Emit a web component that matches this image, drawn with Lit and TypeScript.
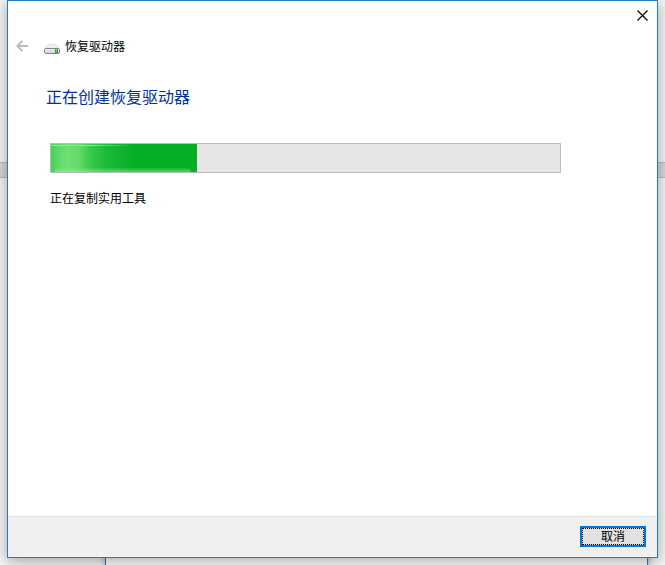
import { LitElement, html, css } from "lit";
import { customElement, property } from "lit/decorators.js";
import { styleMap } from "lit/directives/style-map.js";

@customElement("green-progress")
class GreenProgress extends LitElement {
  @property({ type: Number }) value = 0;

  static styles = css`
    :host {
      display: block;
    }
    .track {
      box-sizing: border-box;
      height: 30px;
      border: 1px solid #bcbcbc;
      background: #e6e6e6;
    }
    .fill {
      position: relative;
      height: 100%;
      overflow: hidden;
      background: linear-gradient(90deg, #45d058 0, #66dc6e 10px, #6ee074 18px, #62da6b 28px, #38c94b 40px, #1cb93a 56px, #06b025 82px);
    }
    .fill::before {
      content: "";
      position: absolute;
      top: 1px;
      left: 0;
      width: 84px;
      height: 1px;
      background: linear-gradient(90deg, #8ceb90 0, #8ceb90 40%, transparent);
    }
    .fill::after {
      content: "";
      position: absolute;
      bottom: 0;
      left: 4px;
      right: 6px;
      height: 4px;
      border-radius: 6px 6px 0 0;
      background: linear-gradient(180deg, rgba(150, 235, 150, 0.1), rgba(160, 240, 160, 0.5));
    }
  `;

  render() {
    return html`
      <div class="track" role="progressbar" aria-label="正在复制实用工具" aria-valuemin="0" aria-valuemax="100" aria-valuenow=${this.value}>
        <div class="fill" style=${styleMap({ width: `${this.value}%` })}></div>
      </div>
    `;
  }
}

@customElement("app-root")
class AppRoot extends LitElement {
  static styles = css`
    :host {
      display: block;
      font-family: "Noto Sans CJK SC", "Noto Sans", sans-serif;
      font-size: 12px;
      line-height: 16px;
      color: #000;
    }
    .desktop {
      position: relative;
      box-sizing: border-box;
      min-height: 100vh;
      padding: 0 7px 7px;
      display: flex;
      overflow: hidden;
      background: #f6f6f6;
    }
    .band {
      position: absolute;
      top: 162px;
      left: 0;
      right: 0;
      box-sizing: border-box;
      height: 16px;
      border: solid #bdbdbd;
      border-width: 1px 0;
      background: #d9d9d9;
    }
    .behind {
      position: absolute;
      bottom: 0;
      left: 105px;
      right: 17px;
      height: 40px;
      border: solid #2b7fc4;
      border-width: 0 1px;
      background: #fff;
      box-shadow: 0 0 6px rgba(0, 0, 0, 0.4);
    }
    .dialog {
      position: relative;
      flex: 1;
      display: flex;
      flex-direction: column;
      border: 1px solid #1b80cc;
      background: #fff;
      box-shadow: 0 3px 14px rgba(0, 0, 0, 0.36);
    }
    .titlebar {
      display: flex;
      justify-content: flex-end;
      height: 29px;
    }
    button {
      font: inherit;
      color: inherit;
      padding: 0;
      border: 0;
      background: none;
    }
    .close {
      width: 29px;
      height: 29px;
    }
    svg {
      display: block;
    }
    .close svg {
      margin: 0 auto;
    }
    .header {
      display: flex;
      align-items: center;
      height: 32px;
      padding-left: 8px;
    }
    .back {
      margin-right: 16px;
    }
    .drive {
      margin: 6px 5px 0 0;
    }
    h1,
    h2,
    p {
      margin: 0;
      font-weight: 400;
    }
    h1 {
      font-size: 12px;
    }
    h2 {
      font-size: 16px;
      line-height: 24px;
      color: #003399;
    }
    .content {
      flex: 1;
      padding: 22px 96px 0 38px;
    }
    .task {
      padding: 35px 0 0 4px;
    }
    .task p {
      margin-top: 17px;
    }
    .footer {
      display: flex;
      justify-content: flex-end;
      padding: 9px 11px 10px;
      border-top: 1px solid #dfdfdf;
      background: #f0f0f0;
    }
    .cancel {
      box-sizing: border-box;
      width: 66px;
      height: 21px;
      padding-bottom: 2px;
      border: 2px solid #0078d7;
      background: #e1e1e1;
      line-height: 15px;
      outline: 1px dotted #000;
      outline-offset: -3px;
    }
  `;

  render() {
    return html`
      <div class="desktop" lang="zh-CN">
        <div class="band"></div>
        <div class="behind"></div>
        <main class="dialog">
          <div class="titlebar">
            <button class="close" aria-label="关闭">
              <svg width="11" height="11" viewBox="0 0 11 11" fill="none" stroke="#000" stroke-width="1.2">
                <path d="M.5 .5l10 10M10.5 .5l-10 10" />
              </svg>
            </button>
          </div>
          <div class="header">
            <button class="back" aria-label="返回" disabled>
              <svg width="12" height="12" viewBox="0 0 12 12" fill="none" stroke="#bcbcbc" stroke-width="2">
                <path d="M12 6H1.5M6.3 .9L1.3 6L6.3 11.1" />
              </svg>
            </button>
            <svg class="drive" width="16" height="10" viewBox="0 0 16 10">
              <defs>
                <linearGradient id="face" x1="0" y1="0" x2="0" y2="1">
                  <stop offset="0" stop-color="#f0f0f6" />
                  <stop offset="1" stop-color="#cdcdd6" />
                </linearGradient>
              </defs>
              <path d="M1 4.2L3.6 1.4Q4 .9 5 .9H11Q12 .9 12.4 1.4L15 4.2Z" fill="#f6f6f6" stroke="#cfcfcf" stroke-width=".8" />
              <rect x=".5" y="4.5" width="15" height="5" rx="1.2" fill="url(#face)" stroke="#85858b" stroke-width="1" />
              <rect x="11" y="5" width="3" height="4" fill="#3a9a34" />
              <rect x="12" y="5" width="1" height="3" fill="#5ee83c" />
            </svg>
            <h1>恢复驱动器</h1>
          </div>
          <div class="content">
            <h2>正在创建恢复驱动器</h2>
            <div class="task">
              <green-progress .value=${28.7}></green-progress>
              <p>正在复制实用工具</p>
            </div>
          </div>
          <div class="footer">
            <button class="cancel">取消</button>
          </div>
        </main>
      </div>
    `;
  }
}
